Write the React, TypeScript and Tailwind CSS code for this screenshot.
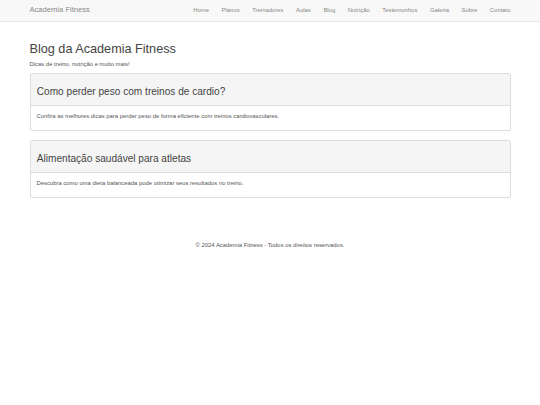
import React from "react";

const links = ["Home", "Planos", "Treinadores", "Aulas", "Blog", "Nutrição", "Testemunhos", "Galeria", "Sobre", "Contato"];

const posts = [
  {
    title: "Como perder peso com treinos de cardio?",
    text: "Confira as melhores dicas para perder peso de forma eficiente com treinos cardiovasculares.",
  },
  {
    title: "Alimentação saudável para atletas",
    text: "Descubra como uma dieta balanceada pode otimizar seus resultados no treino.",
  },
];

const App = () => {
  return (
    <div className="min-h-screen bg-white text-[#333] font-['Liberation_Sans',Arial,sans-serif]">
      {/* Navbar */}
      <nav className="bg-[#f8f8f8] border-b border-[#e7e7e7]">
        <div className="mx-auto w-[493.6px] px-[6.3px] flex justify-between items-center h-[21px]">
          <a className="-ml-[6.3px] px-[6.3px] text-[7.6px] leading-[8.4px] text-[#888]">Academia Fitness</a>
          <ul className="-mr-[6.3px] flex">
            {links.map((l) => (
              <li key={l}>
                <a className="block px-[6.3px] text-[5.9px] leading-[8.4px] text-[#888]">{l}</a>
              </li>
            ))}
          </ul>
        </div>
      </nav>

      {/* Blog */}
      <div className="mx-auto w-[493.6px] px-[6.3px]">
        <h2 className="mt-[20px] mb-[4.2px] text-[12.66px] leading-[14px] font-normal text-[#444]">Blog da Academia Fitness</h2>
        <p className="text-[5.9px] leading-[8.4px] mb-[4.2px] text-[#555]">Dicas de treino, nutrição e muito mais!</p>

        {posts.map((p) => (
          <div key={p.title} className="border border-[#ddd] rounded-[2px] mb-[9px] overflow-hidden">
            <div className="bg-[#f5f5f5] border-b border-[#ddd] px-[6.3px] py-[4px]">
              <h3 className="mt-[8px] mb-[4px] text-[10.1px] leading-[11px] font-normal text-[#444]">{p.title}</h3>
            </div>
            <div className="p-[6px]">
              <p className="text-[5.9px] leading-[8px] mb-[4px] text-[#555]">{p.text}</p>
            </div>
          </div>
        ))}
      </div>

      {/* Footer */}
      <footer className="pt-[34px] text-center">
        <p className="text-[5.9px] leading-[8.4px] text-[#555]">© 2024 Academia Fitness - Todos os direitos reservados.</p>
      </footer>
    </div>
  );
};

export default App;
